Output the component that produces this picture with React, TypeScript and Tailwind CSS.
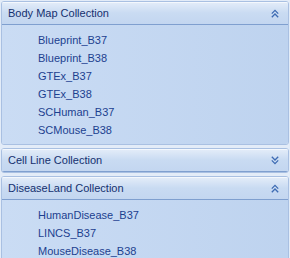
import React from "react";

interface Group {
  title: string;
  open: boolean;
  items: string[];
}

const groups: Group[] = [
  {
    title: "Body Map Collection",
    open: true,
    items: ["Blueprint_B37", "Blueprint_B38", "GTEx_B37", "GTEx_B38", "SCHuman_B37", "SCMouse_B38"],
  },
  { title: "Cell Line Collection", open: false, items: [] },
  {
    title: "DiseaseLand Collection",
    open: true,
    items: ["HumanDisease_B37", "LINCS_B37", "MouseDisease_B38"],
  },
];

function Chevrons({ up }: { up: boolean }) {
  return (
    <svg width="8" height="9" viewBox="0 0 8 9" className={up ? "" : "rotate-180"}>
      <path d="M0.8 4.6 L4 1.4 L7.2 4.6 M0.8 8.2 L4 5 L7.2 8.2" fill="none" stroke="#3d6bb3" strokeWidth="1.3" />
    </svg>
  );
}

function NavGroup({ group }: { group: Group }) {
  return (
    <div className="shrink-0 rounded-[3px] border border-[#a9c0e2] overflow-hidden">
      <div className="h-[23px] flex items-center justify-between pl-[6px] pr-[9px] bg-gradient-to-b from-[#e4edf9] via-[#c9dbf2] to-[#c3d6f0] border-b border-[#7f9fcf] shadow-[inset_0_1px_0_#f4f8fd]">
        <span className="text-[11px] text-[#15306f]">{group.title}</span>
        <Chevrons up={group.open} />
      </div>
      {group.open && (
        <div className="bg-gradient-to-r from-[#cadcf4] to-[#bed3ef] pt-[6px] pb-[5px] pl-[36px] flex flex-col">
          {group.items.map((item) => (
            <div key={item} className="h-[18px] flex items-center text-[11px] text-[#1c3f8f]">
              {item}
            </div>
          ))}
        </div>
      )}
    </div>
  );
}

export default function App() {
  return (
    <div
      className="w-[290px] h-[258px] overflow-hidden bg-[#e3ecf8] pt-[1px] px-[1px] flex flex-col gap-[3px]"
      style={{ fontFamily: "'Liberation Sans', Arial, sans-serif" }}
    >
      {groups.map((g) => (
        <NavGroup key={g.title} group={g} />
      ))}
    </div>
  );
}
